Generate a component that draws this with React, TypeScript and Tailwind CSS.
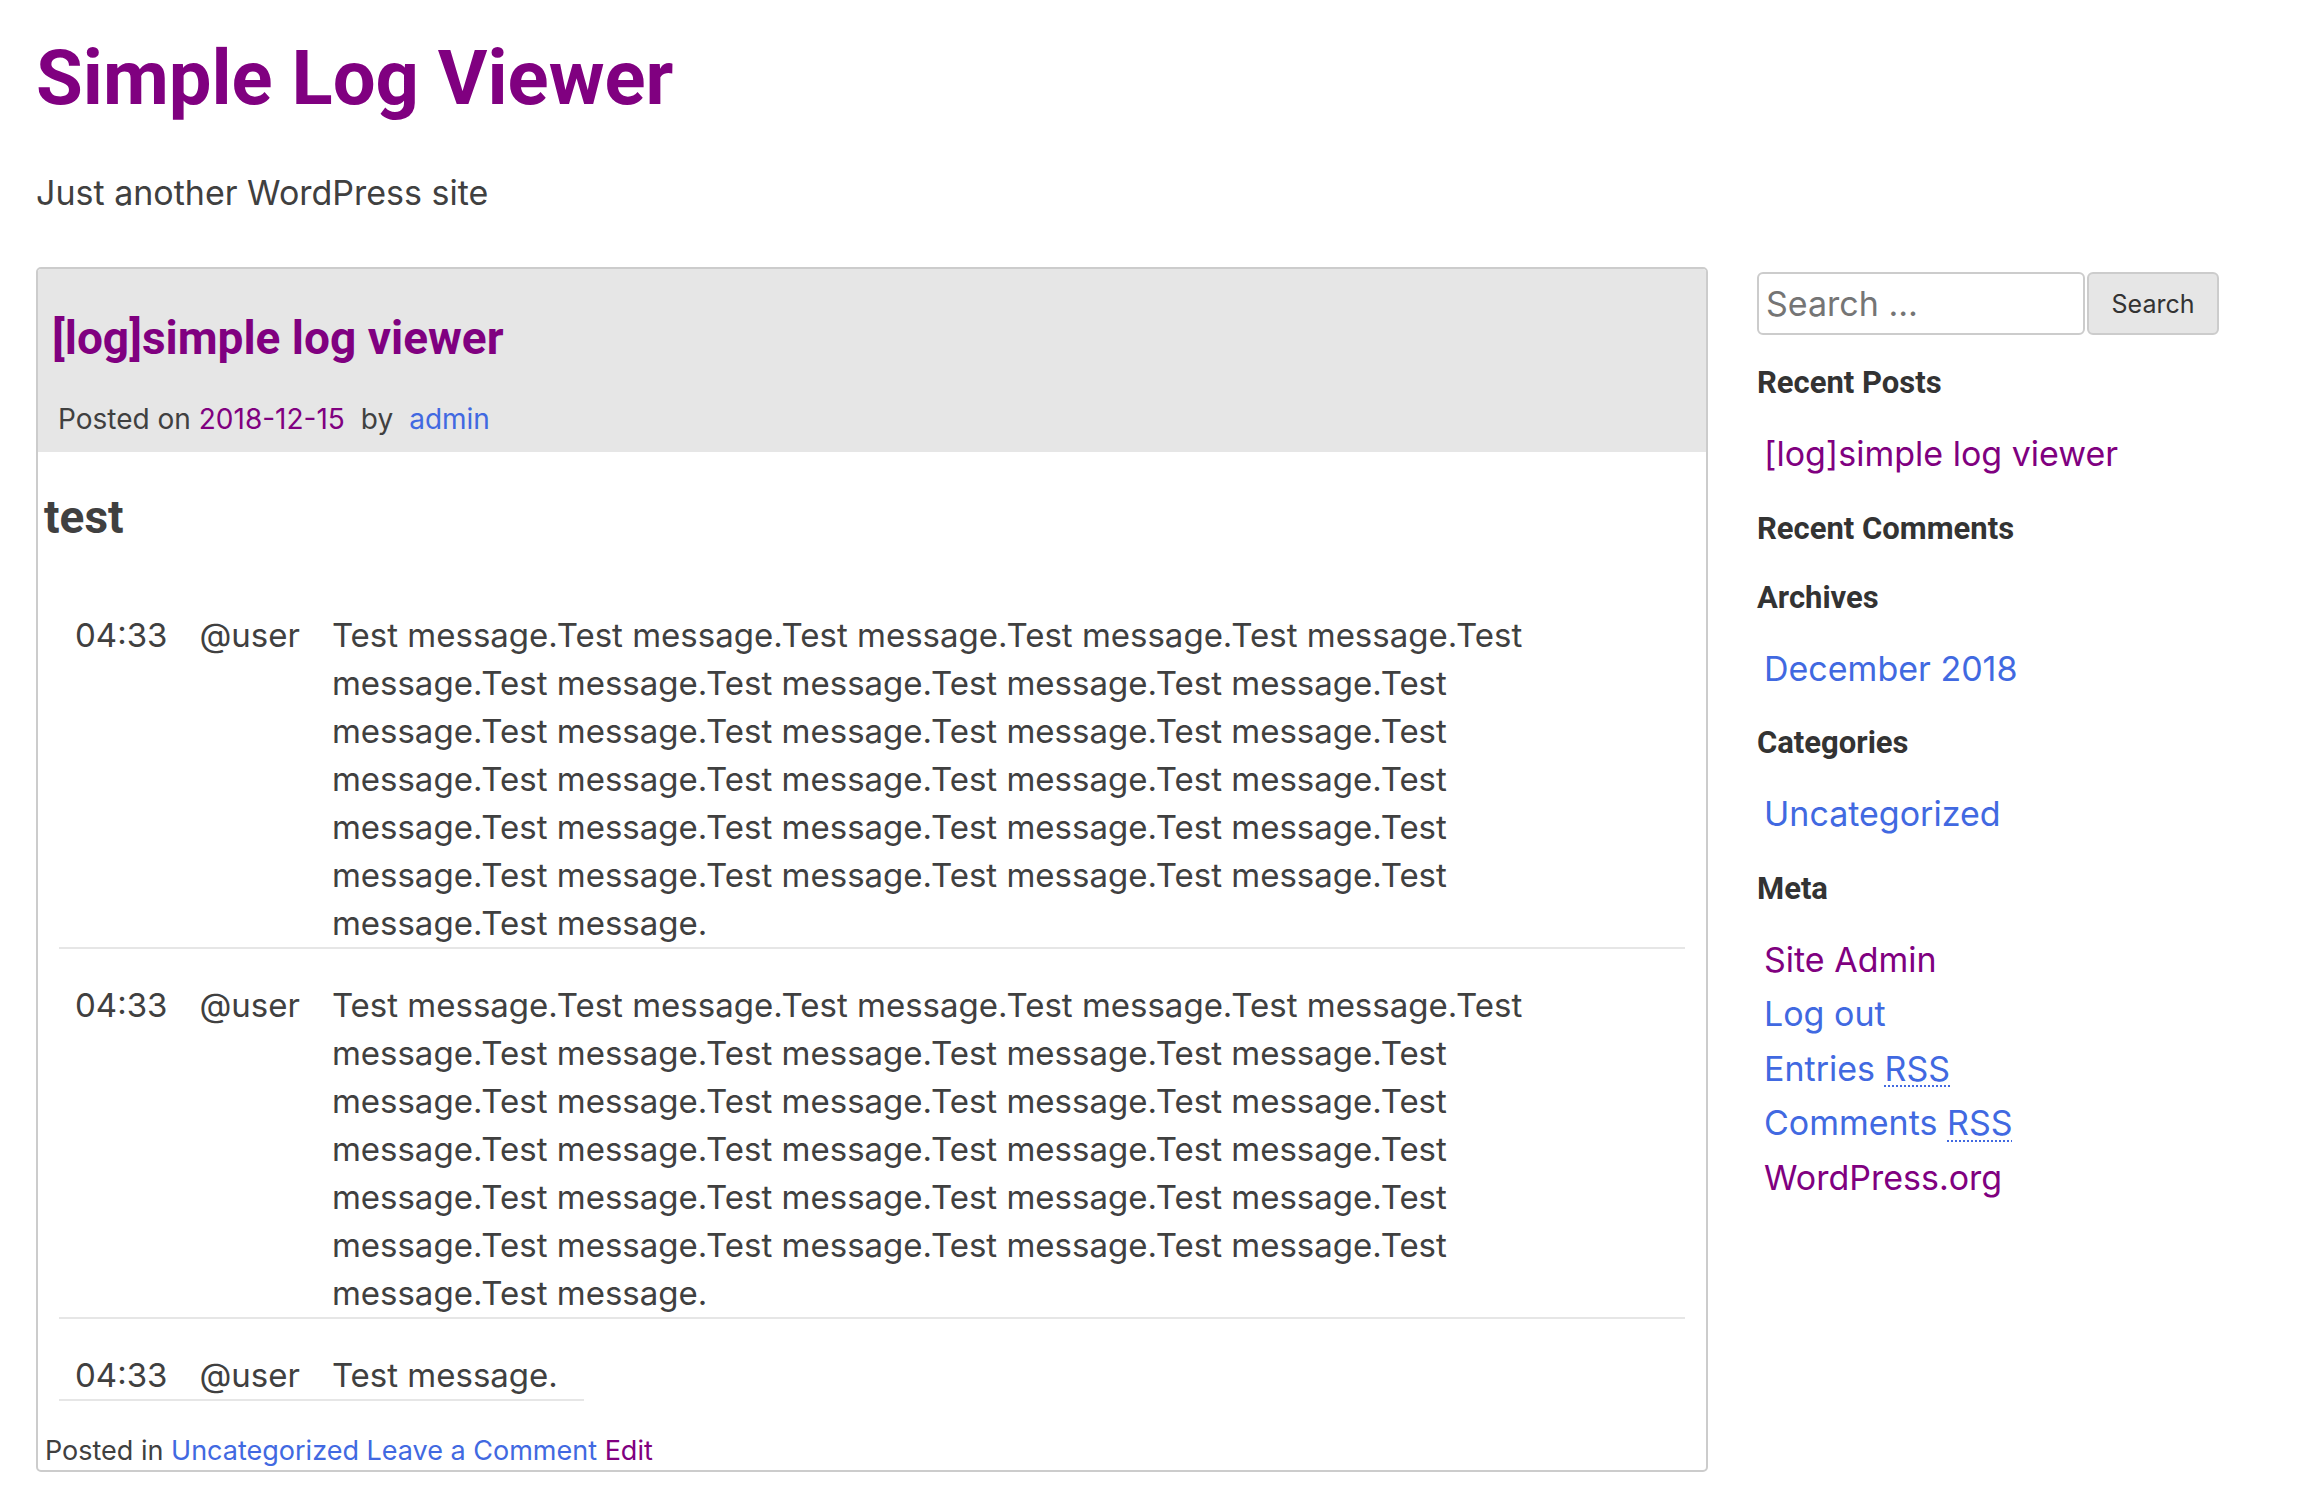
const message = "Test message.".repeat(32);

const logs = [
  { time: "04:33", user: "@user", text: message },
  { time: "04:33", user: "@user", text: message },
  { time: "04:33", user: "@user", text: "Test message." },
];

const purple = "text-[#800080]";
const blue = "text-[#4169e1]";

function LogRow({ time, user, text }: { time: string; user: string; text: string }) {
  return (
    <div className="flex w-fit max-w-full border-b-2 border-[#e6e6e6] pt-[32px] text-[33px] leading-[48px]">
      <div className="shrink-0 px-4">{time}</div>
      <div className="shrink-0 px-4">{user}</div>
      <div className="min-w-0 pr-[26px] pl-4">{text}</div>
    </div>
  );
}

function Widget({ title, children }: { title: string; children?: React.ReactNode }) {
  return (
    <section className="flex flex-col">
      <h2 className="mt-[18px] mb-[15px] font-['Roboto',sans-serif] text-[31px] font-bold leading-[36px] text-[#333]">
        {title}
      </h2>
      {children && <ul className="my-[11px] pl-[7px] text-[34px] leading-[54.5px]">{children}</ul>}
    </section>
  );
}

export default function App() {
  return (
    <div className="min-h-screen bg-white px-[36px] pt-[40px] font-['Inter',sans-serif] text-[#404040]">
      {/* Site header */}
      <h1 className={`font-['Roboto',sans-serif] text-[76px] font-bold leading-none ${purple}`}>
        Simple Log Viewer
      </h1>
      <p className="mt-[53px] text-[34px] leading-[48px]">Just another WordPress site</p>

      <div className="mt-[50px] flex items-start gap-[49px]">
        {/* Post */}
        <article className="w-[1672px] shrink-0 overflow-hidden rounded-[5px] border-2 border-[#cccccc]">
          <header className="bg-[#e6e6e6] px-[14px] pt-[41px] pb-[12px]">
            <h2 className={`font-['Roboto',sans-serif] text-[46px] font-bold leading-[56px] ${purple}`}>
              [log]simple log viewer
            </h2>
            <div className="mt-[32px] ml-[6px] text-[28px] leading-[42px]">
              Posted on <a className={purple}>2018-12-15</a>
              <span className="ml-[16px]">by</span>
              <a className={`ml-[16px] ${blue}`}>admin</a>
            </div>
          </header>

          <div className="px-[6px] pt-[37px]">
            <h3 className="font-['Roboto',sans-serif] text-[46px] font-bold leading-[56px]">test</h3>
            <div className="mx-[15px] mt-[34px] flex flex-col">
              {logs.map((log, i) => (
                <LogRow key={i} {...log} />
              ))}
            </div>
          </div>

          <footer className="mt-[31px] px-[7px] text-[27px] leading-[38px]">
            Posted in <a className={blue}>Uncategorized</a> <a className={blue}>Leave a Comment</a>{" "}
            <a className={purple}>Edit</a>
          </footer>
        </article>

        {/* Sidebar */}
        <aside className="flex w-[462px] shrink-0 flex-col pt-[5px]">
          <form className="flex gap-[2px]">
            <input
              type="search"
              placeholder="Search …"
              className="h-[63px] w-[328px] rounded-[6px] border-2 border-[#cccccc] bg-white pl-[7px] text-[34px] text-[#404040] outline-none placeholder:text-[#757575]"
            />
            <button
              type="button"
              className="h-[63px] w-[132px] rounded-[6px] border-2 border-[#cccccc] bg-[#e6e6e6] pt-[3px] text-[25px] text-[#333]"
            >
              Search
            </button>
          </form>

          <div className="flex flex-col pt-[12px]">
            <Widget title="Recent Posts">
              <li>
                <a className={purple}>[log]simple log viewer</a>
              </li>
            </Widget>
            <Widget title="Recent Comments" />
            <Widget title="Archives">
              <li>
                <a className={blue}>December 2018</a>
              </li>
            </Widget>
            <Widget title="Categories">
              <li>
                <a className={blue}>Uncategorized</a>
              </li>
            </Widget>
            <Widget title="Meta">
              <li>
                <a className={purple}>Site Admin</a>
              </li>
              <li>
                <a className={blue}>Log out</a>
              </li>
              <li>
                <a className={blue}>
                  Entries <abbr className="underline decoration-dotted decoration-2 underline-offset-[5px]">RSS</abbr>
                </a>
              </li>
              <li>
                <a className={blue}>
                  Comments <abbr className="underline decoration-dotted decoration-2 underline-offset-[5px]">RSS</abbr>
                </a>
              </li>
              <li>
                <a className={purple}>WordPress.org</a>
              </li>
            </Widget>
          </div>
        </aside>
      </div>
    </div>
  );
}
